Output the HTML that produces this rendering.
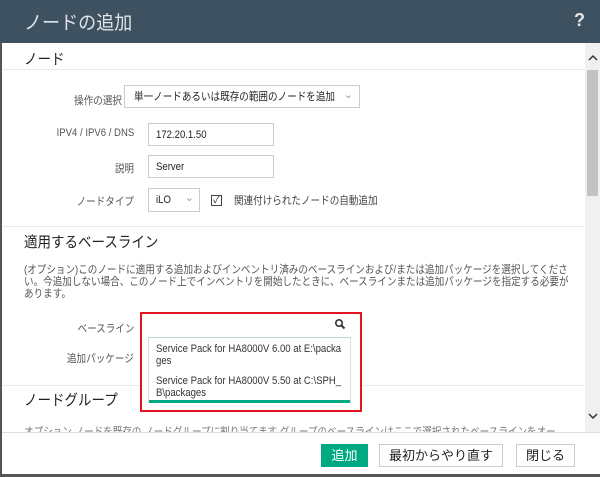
<!DOCTYPE html>
<html><head><meta charset="utf-8"><style>
*{margin:0;padding:0;box-sizing:border-box}
body{width:600px;height:477px;overflow:hidden;background:#fff;font-family:"Liberation Sans","Noto Sans CJK JP",sans-serif;position:relative;color:#333}
.a{position:absolute}
.s{display:inline-block;transform:scaleX(.87);transform-origin:left center;white-space:nowrap}
.r{display:inline-block;transform:scaleX(.87);transform-origin:right center;white-space:nowrap}
.lbl{font-size:11px;color:#555;text-align:right;width:134px;left:0}
.in{border:1px solid #ccc;background:#fff;font-size:11px;color:#222;padding-left:7px;line-height:22px;height:23px}
.h{font-size:15px;color:#222}
.btn{border:1px solid #ccc;background:#fff;font-size:13px;color:#222;text-align:center;line-height:21px;height:23px}
</style></head><body>
<div class="a" style="left:0;top:0;width:600px;height:43px;background:#3e5161"></div>
<div class="a" style="left:24px;top:8px;font-size:19px;color:#dfe4e8"><span class="s" style="transform:scaleX(.95)">ノードの追加</span></div>
<div class="a" style="left:574px;top:10px;font-size:18px;font-weight:bold;color:#e8e8e8">?</div>
<div class="a" style="left:0;top:43px;width:2px;height:434px;background:#555"></div>
<div class="a" style="left:2px;top:69px;width:583px;height:1px;background:#e8e8e8"></div>
<div class="a h" style="left:24px;top:48px"><span class="s" style="transform:scaleX(.9)">ノード</span></div>
<div class="a" style="left:585px;top:43px;width:15px;height:390px;background:#f0f0f0"></div>
<svg class="a" style="left:587px;top:54px" width="12" height="8"><path d="M2 6 L6 2 L10 6" stroke="#333" stroke-width="1.5" fill="none"/></svg>
<div class="a" style="left:587px;top:70px;width:11px;height:126px;background:#c2c2c2"></div>
<svg class="a" style="left:587px;top:412px" width="12" height="8"><path d="M2 2 L6 6 L10 2" stroke="#333" stroke-width="1.5" fill="none"/></svg>

<div class="a lbl" style="width:122px;top:92px"><span class="r">操作の選択</span></div>
<div class="a in" style="left:124px;top:85px;width:236px;padding-left:9px"><span class="s">単一ノードあるいは既存の範囲のノードを追加</span><span style="position:absolute;right:6px;color:#999;top:-2px">⌄</span></div>
<div class="a lbl" style="top:127px"><span class="r">IPV4 / IPV6 / DNS</span></div>
<div class="a in" style="left:148px;top:123px;width:126px"><span class="s">172.20.1.50</span></div>
<div class="a lbl" style="top:160px"><span class="r">説明</span></div>
<div class="a in" style="left:148px;top:155px;width:126px"><span class="s">Server</span></div>
<div class="a lbl" style="top:193px"><span class="r">ノードタイプ</span></div>
<div class="a in" style="left:148px;top:188px;width:52px;height:24px"><span class="s">iLO</span><span style="position:absolute;right:5px;color:#999;top:-2px">⌄</span></div>
<div class="a" style="left:211px;top:195px;width:11px;height:11px;border:1px solid #444;font-size:10px;line-height:9px;text-align:center">✓</div>
<div class="a" style="left:234px;top:192px;font-size:11px;color:#444"><span class="s">関連付けられたノードの自動追加</span></div>

<div class="a" style="left:2px;top:226px;width:583px;height:1px;background:#e8e8e8"></div>
<div class="a h" style="left:24px;top:231px"><span class="s" style="transform:scaleX(.9)">適用するベースライン</span></div>
<div class="a" style="left:24px;top:264px;font-size:11px;color:#555;line-height:12px"><span class="s" style="transform:scaleX(.87)">(オプション)このノードに適用する追加およびインベントリ済みのベースラインおよび/または追加パッケージを選択してくださ<br>い。今追加しない場合、このノード上でインベントリを開始したときに、ベースラインまたは追加パッケージを指定する必要が<br>あります。</span></div>
<div class="a lbl" style="top:320px"><span class="r">ベースライン</span></div>
<div class="a lbl" style="top:350px"><span class="r">追加パッケージ</span></div>
<div class="a" style="left:2px;top:385px;width:583px;height:1px;background:#e8e8e8"></div>
<div class="a h" style="left:24px;top:389px"><span class="s" style="transform:scaleX(.9)">ノードグループ</span></div>
<div class="a" style="left:24px;top:426px;font-size:11px;color:#777;height:6px;overflow:hidden;width:560px;line-height:12px"><span class="s">オプション ノードを既存の ノードグループに割り当てます グループのベースラインはここで選択されたベースラインをオー</span></div>

<div class="a" style="left:140px;top:312px;width:222px;height:100px;border:2px solid #e1151f;background:#fff"></div>
<svg class="a" style="left:334px;top:318px" width="12" height="12"><circle cx="5" cy="5" r="3.2" stroke="#333" stroke-width="1.6" fill="none"/><path d="M7.5 7.5 L10.5 10.5" stroke="#333" stroke-width="2"/></svg>
<div class="a" style="left:148px;top:337px;width:203px;height:66px;border:1px solid #ddd;border-top:1px solid #b8d8cc;font-size:11px;color:#333;line-height:12px;padding:5px 5px 0 7px"><span class="s">Service Pack for HA8000V 6.00 at E:\packa<br>ges</span><div style="height:8px"></div><span class="s">Service Pack for HA8000V 5.50 at C:\SPH_<br>B\packages</span></div>
<div class="a" style="left:149px;top:400px;width:201px;height:3px;background:#01a982"></div>

<div class="a" style="left:2px;top:432px;width:598px;height:1px;background:#ddd"></div>
<div class="a btn" style="left:321px;top:444px;width:47px;background:#01a982;border-color:#01a982;color:#fff">追加</div>
<div class="a btn" style="left:379px;top:444px;width:124px">最初からやり直す</div>
<div class="a btn" style="left:516px;top:444px;width:59px">閉じる</div>
<div class="a" style="left:2px;top:474px;width:598px;height:3px;background:#555"></div>
</body></html>
